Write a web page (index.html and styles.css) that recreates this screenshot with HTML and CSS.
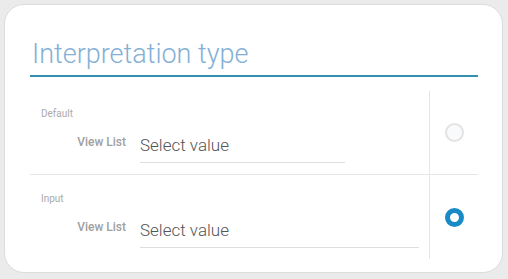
FILE: index.html
```html
<!DOCTYPE html>
<html>
<head>
  <title>Interpretation type</title>
  <link rel="stylesheet" href="styles.css">
</head>
<body>
  <div class="card">
    <h1 class="card-title">Interpretation type</h1>

    <div class="option">
      <div class="option-body">
        <div class="option-name">Default</div>
        <div class="field">
          <span class="field-label">View List</span>
          <div class="field-input short">Select value</div>
        </div>
      </div>
      <div class="option-check">
        <span class="radio"></span>
      </div>
    </div>

    <div class="option last">
      <div class="option-body">
        <div class="option-name">Input</div>
        <div class="field">
          <span class="field-label">View List</span>
          <div class="field-input long">Select value</div>
        </div>
      </div>
      <div class="option-check">
        <span class="radio checked"></span>
      </div>
    </div>
  </div>
</body>
</html>
```

FILE: styles.css
```css
html, body {
  margin: 0;
  height: 100%;
}
body {
  background-color: #ebebeb;
  font-family: Roboto, "Noto Sans", sans-serif;
  padding: 4px 5px 6px 4px;
  box-sizing: border-box;
}
.card {
  height: 100%;
  box-sizing: border-box;
  background-color: #fff;
  border: 1px solid #dcdcdc;
  border-radius: 20px;
  padding: 0 24px 14px 25px;
}
.card-title {
  margin: 0 0 14px;
  padding: 34px 0 6px 2px;
  font-size: 27px;
  font-weight: 300;
  line-height: 30px;
  color: #84b0d6;
  border-bottom: 2px solid #3391b0;
}
.option {
  display: flex;
  height: 83px;
  border-bottom: 1px solid #e6e6e6;
}
.option.last {
  height: 84px;
  border-bottom: none;
}
.option.last .option-body {
  padding-top: 17px;
}
.option-body {
  flex: 1;
  padding: 16px 0 0 11px;
}
.option-name {
  font-size: 10px;
  line-height: 14px;
  color: #aaa;
}
.field {
  display: flex;
  align-items: flex-start;
  margin-top: 10px;
}
.field-label {
  width: 85px;
  text-align: right;
  font-size: 12px;
  font-weight: 500;
  line-height: 22px;
  color: #a0a0a0;
  margin-right: 14px;
}
.field-input {
  font-size: 17px;
  font-weight: 300;
  line-height: 22px;
  color: #555;
  padding: 3px 0 6px;
  border-bottom: 1px solid #dedede;
}
.field-input.short {
  width: 205px;
}
.field-input.long {
  width: 279px;
}
.option-check {
  width: 48px;
  border-left: 1px solid #e6e6e6;
  display: flex;
  align-items: center;
  justify-content: center;
}
.radio {
  width: 19px;
  height: 19px;
  box-sizing: border-box;
  border-radius: 50%;
  border: 2px solid #e3e3e3;
  background-color: #f9fafb;
}
.radio.checked {
  border: 5px solid #1a8ac6;
  background-color: #fff;
}
```
